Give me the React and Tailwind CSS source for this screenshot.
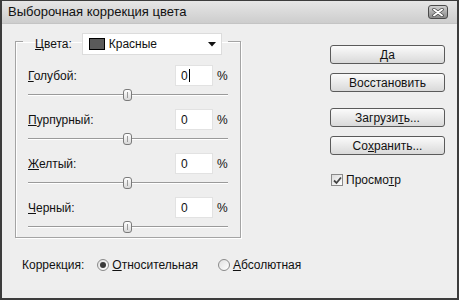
import React from "react";

const font = "font-['Liberation_Sans',Arial,sans-serif]";

const Btn = ({ children }) => (
    <div className="w-[115px] h-[19px] rounded-[3px] border border-[#5a5a5a] bg-gradient-to-b from-[#fbfbfb] to-[#d9d9d9] flex items-center justify-center text-[12px] leading-none text-[#111]">
        {children}
    </div>
);

const Slider = () => (
    <div className="relative ml-[12px] w-[200px] h-[12px] mt-[3px]">
        <div className="absolute left-0 right-0 top-[5px] h-[2px] border-t border-[#9a9a9a] border-b border-b-white" />
        <div className="absolute left-[95px] top-0 w-[9px] h-[12px] rounded-[3px] border border-[#7a7a7a] bg-gradient-to-b from-[#ffffff] to-[#d8d8d8] flex justify-center">
            <div className="w-px h-[6px] mt-[2px] bg-[#9a9a9a]" />
        </div>
    </div>
);

const Row = ({ u, rest, caret, first }) => (
    <div className={first ? "" : "mt-[8px]"}>
        <div className="flex items-center h-[21px]">
            <div className="w-[159px] pl-[12px] text-[12px] text-[#111]">
                <span className="underline">{u}</span>{rest}
            </div>
            <div className="w-[38px] h-[21px] bg-white border border-[#e2e2e2] flex items-center pl-[5px] text-[12px] text-[#111]">
                0{caret && <span className="inline-block w-px h-[13px] bg-black ml-[1px]" />}
            </div>
            <span className="ml-[4px] text-[12px] text-[#111]">%</span>
        </div>
        <Slider />
    </div>
);

const Radio = ({ on }) => (
    <div className="w-[12px] h-[12px] rounded-full border border-[#8a8a8a] bg-gradient-to-br from-[#e0e0e0] to-[#ffffff] flex items-center justify-center">
        {on && <div className="w-[6px] h-[6px] rounded-full bg-[#3a3a3a]" />}
    </div>
);

export default function App() {
    return (
        <div className={`w-[459px] h-[300px] bg-[#eeeeee] border-2 border-t border-[#3c3c3c] flex flex-col ${font}`}>
            <div className="h-[23px] flex items-center justify-between pl-[6px] pr-[9px] bg-gradient-to-b from-[#e6e6e6] to-[#cdcdcd] border-b border-[#c4c4c4]">
                <span className="text-[13px] text-[#111]">Выборочная коррекция цвета</span>
                <div className="w-[20px] h-[14px] rounded-[3px] border border-[#4a4a4a] bg-gradient-to-b from-[#d0d0d0] to-[#8a8a8a] flex items-center justify-center">
                    <svg width="12" height="9" viewBox="0 0 12 9">
                        <path d="M2 1.5 L10 7.5 M10 1.5 L2 7.5" stroke="#444" strokeWidth="3.4" strokeLinecap="round" />
                        <path d="M2 1.5 L10 7.5 M10 1.5 L2 7.5" stroke="#fff" strokeWidth="2" strokeLinecap="round" />
                    </svg>
                </div>
            </div>

            <div className="flex">
                <fieldset className="ml-[13px] mt-[3px] w-[226px] border border-[#a4a4a4] shadow-[inset_1px_1px_0_#fff,1px_1px_0_#fff] pt-[10px] pb-[4px]">
                    <legend className="ml-[7px] pt-[6px] flex items-center">
                        <span className="pl-[12px] pr-[10px] text-[12px] text-[#111]">
                            <span className="underline">Ц</span>вета:
                        </span>
                        <div className="w-[140px] h-[22px] bg-white border border-[#dcdcdc] flex items-center pl-[6px] pr-[5px]">
                            <div className="w-[16px] h-[12px] bg-[#5a5a5a] border border-black" />
                            <span className="ml-[4px] text-[12px] text-[#111]">Красные</span>
                            <svg className="ml-auto" width="8" height="5" viewBox="0 0 8 5">
                                <path d="M0 0 H8 L4 4.5 Z" fill="#111" />
                            </svg>
                        </div>
                        <span className="w-[6px]" />
                    </legend>
                    <Row first u="Г" rest="олубой:" caret />
                    <Row u="П" rest="урпурный:" />
                    <Row u="Ж" rest="елтый:" />
                    <Row u="Ч" rest="ерный:" />
                </fieldset>

                <div className="ml-auto pr-[12px] pt-[21px] flex flex-col">
                    <Btn>Да</Btn>
                    <div className="mt-[9px]"><Btn>Восстановить</Btn></div>
                    <div className="mt-[16px]"><Btn>Загрузи<span className="underline">т</span>ь...</Btn></div>
                    <div className="mt-[9px]"><Btn>Со<span className="underline">х</span>ранить...</Btn></div>
                    <div className="mt-[16px] flex items-center pl-[1px]">
                        <div className="w-[12px] h-[12px] border border-[#8a8a8a] bg-gradient-to-br from-[#dcdcdc] to-[#ffffff] flex items-center justify-center">
                            <svg width="9" height="9" viewBox="0 0 9 9">
                                <path d="M1 4.5 L3.5 7 L8 1.5" stroke="#444" strokeWidth="1.8" fill="none" />
                            </svg>
                        </div>
                        <span className="ml-[3px] text-[12px] text-[#111]">Просмо<span className="underline">т</span>р</span>
                    </div>
                </div>
            </div>

            <div className="mt-[20px] pl-[20px] flex items-center h-[14px] text-[12px] text-[#111]">
                <span>Коррекция:</span>
                <div className="ml-[13px]"><Radio on /></div>
                <span className="ml-[3px]"><span className="underline">О</span>тносительная</span>
                <div className="ml-[20px]"><Radio /></div>
                <span className="ml-[3px]"><span className="underline">А</span>бсолютная</span>
            </div>
        </div>
    );
}
